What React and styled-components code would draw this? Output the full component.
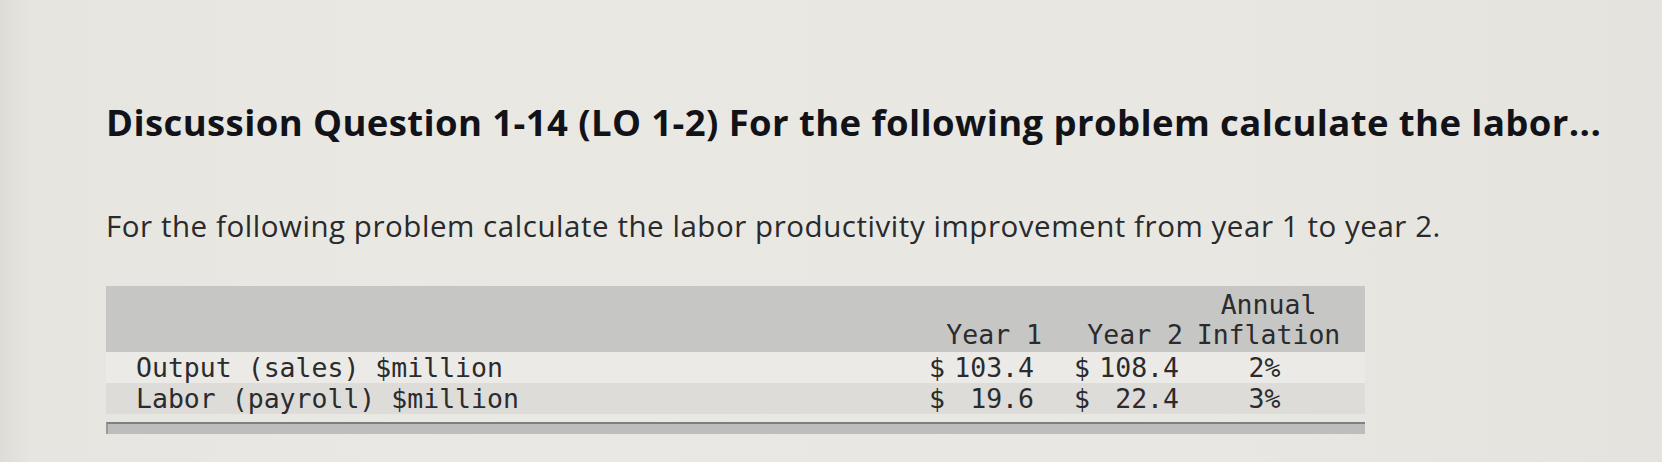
import styled, { createGlobalStyle } from "styled-components";

const GlobalStyle = createGlobalStyle`
  html, body {
    margin: 0;
    padding: 0;
  }
  body {
    width: 1662px;
    height: 462px;
    overflow: hidden;
    background: linear-gradient(90deg, #dedcd6 0px, #e6e5e0 30px, #e9e8e3 400px, #e8e7e2 1200px, #e4e3de 1662px);
  }
`;

const Page = styled.div`
  padding: 100px 0 0 106px;
`;

const Title = styled.h1`
  margin: 0;
  font-family: "Open Sans", sans-serif;
  font-weight: 700;
  font-size: 36.5px;
  line-height: 44px;
  letter-spacing: 0.4px;
  color: #121219;
  white-space: nowrap;
  font-variant-ligatures: none;
`;

const Lead = styled.p`
  margin: 64px 0 0;
  font-family: "Open Sans", sans-serif;
  font-weight: 400;
  font-size: 29.5px;
  line-height: 35px;
  letter-spacing: 0.55px;
  color: #2a2a2c;
  white-space: nowrap;
  font-variant-ligatures: none;
`;

const Table = styled.div`
  margin-top: 43px;
  width: 1259px;
  display: grid;
  grid-template-columns: 819px 125px 137px 163px;
  padding-right: 15px;
  box-sizing: border-box;
  font-family: "DejaVu Sans Mono", monospace;
  font-size: 26.5px;
  color: #2b2b2e;
`;

const HeadBand = styled.div`
  grid-column: 1 / -1;
  display: grid;
  grid-template-columns: subgrid;
  background: #c6c6c4;
  padding: 4px 0 2px;
  margin-right: -15px;
  padding-right: 15px;
`;

const HeadCell = styled.div`
  display: flex;
  flex-direction: column;
  align-items: ${(p) => (p.center ? "center" : "flex-end")};
  justify-content: flex-end;
  padding-right: ${(p) => p.pr || 0}px;
  line-height: 30px;
`;

const Row = styled.div`
  grid-column: 1 / -1;
  display: grid;
  grid-template-columns: subgrid;
  background: ${(p) => (p.shade ? "#dddcd8" : "#ebeae6")};
  line-height: 31px;
  margin-right: -15px;
  padding-right: 15px;
`;

const Label = styled.div`
  padding-left: 30px;
  white-space: pre;
`;

const Money = styled.div`
  display: flex;
  justify-content: space-between;
  padding: 0 ${(p) => p.pr}px 0 ${(p) => p.pl}px;
  white-space: pre;
`;

const Pct = styled.div`
  text-align: center;
  padding-right: 8px;
`;

const FootBar = styled.div`
  grid-column: 1 / -1;
  margin-top: 8px;
  margin-right: -15px;
  height: 10px;
  background: #bdbdbb;
  border-top: 2px solid #7f7f7f;
  border-left: 2px solid #9a9a9a;
`;

const rows = [
  { label: "Output (sales) $million", y1: "103.4", y2: "108.4", inf: "2%" },
  { label: "Labor (payroll) $million", y1: "19.6", y2: "22.4", inf: "3%" },
];

export default function App() {
  return (
    <>
      <GlobalStyle />
      <Page>
        <Title>
          Discussion Question 1-14 (LO 1-2) For the following problem calculate the labor...
        </Title>
        <Lead>
          For the following problem calculate the labor productivity improvement from year 1 to year 2.
        </Lead>
        <Table>
          <HeadBand>
            <div />
            <HeadCell pr={8}>Year 1</HeadCell>
            <HeadCell pr={4}>Year 2</HeadCell>
            <HeadCell center>
              <span>Annual</span>
              <span>Inflation</span>
            </HeadCell>
          </HeadBand>
          {rows.map((r, i) => (
            <Row key={r.label} shade={i === 1}>
              <Label>{r.label}</Label>
              <Money pl={4} pr={16}>
                <span>$</span>
                <span>{r.y1}</span>
              </Money>
              <Money pl={24} pr={8}>
                <span>$</span>
                <span>{r.y2}</span>
              </Money>
              <Pct>{r.inf}</Pct>
            </Row>
          ))}
          <FootBar />
        </Table>
      </Page>
    </>
  );
}
